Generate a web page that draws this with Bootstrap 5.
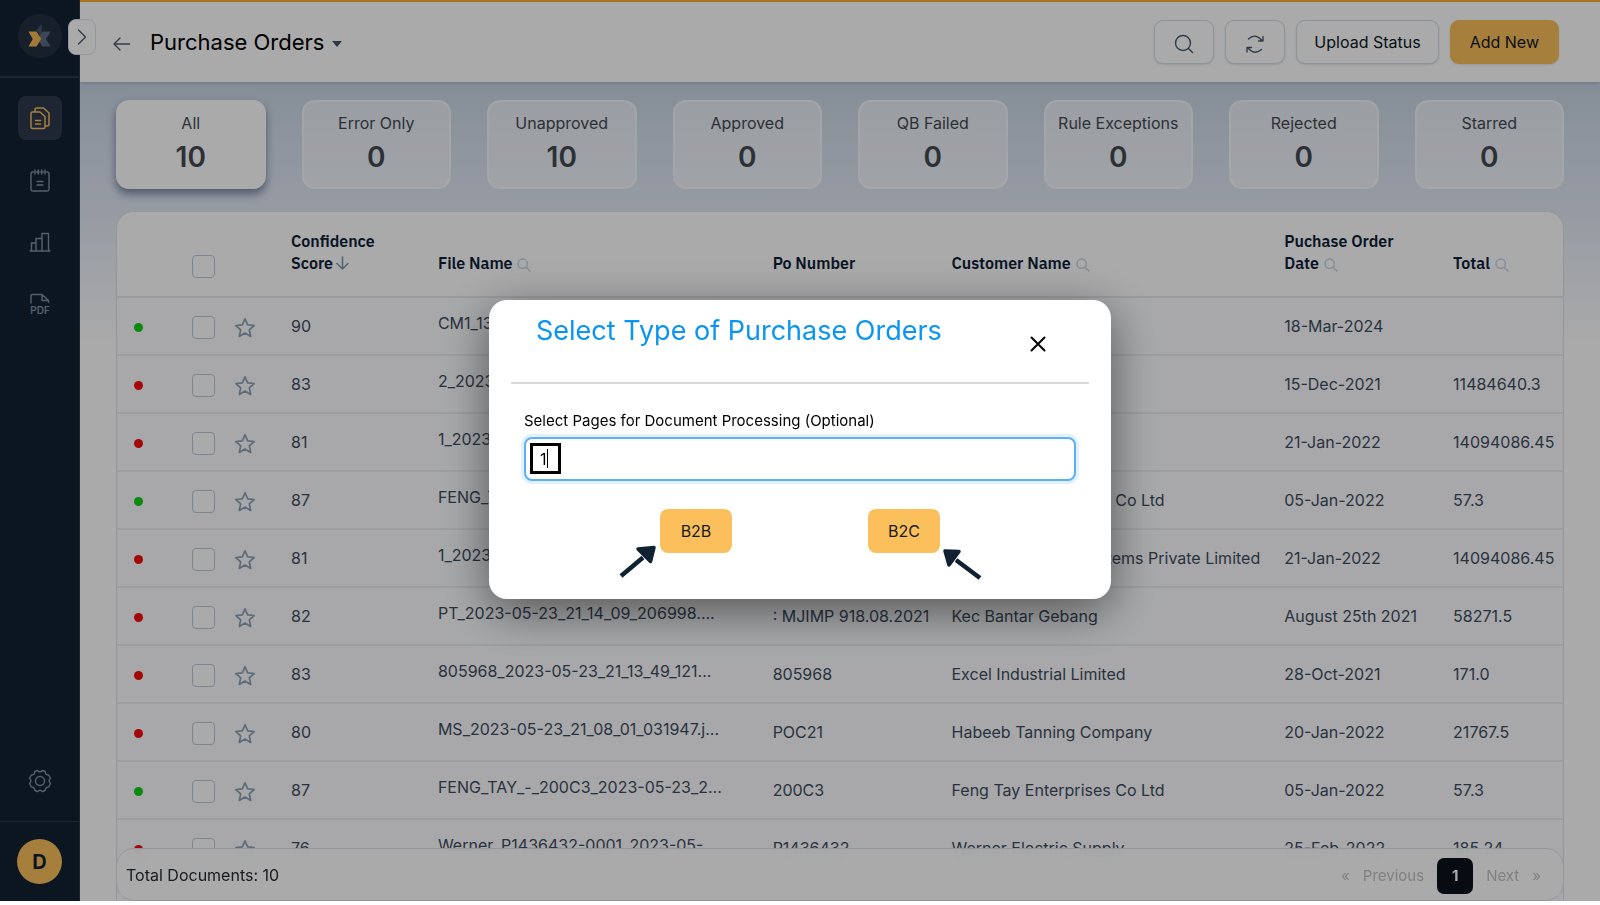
<!DOCTYPE html>
<html lang="en">
<head>
<meta charset="utf-8">
<meta name="viewport" content="width=device-width, initial-scale=1">
<title>Purchase Orders</title>
<link rel="stylesheet" href="https://cdn.jsdelivr.net/npm/bootstrap@5.3.0/dist/css/bootstrap.min.css">
<style>
  body { font-family: Inter, "Liberation Sans", sans-serif; font-size: 16px; line-height: 22px; color: #000; background: #fff; overflow: hidden; }
  .shell, .modal.type-modal { height: calc(100vh - 4px); }
  svg { display: block; }
  .line-icon { fill: none; stroke: currentColor; stroke-linecap: round; stroke-linejoin: round; }

  .side { width: 80px; background: #132230; color: #8090a3; border-right: 1px solid #2b3a4b; }
  .side-top { height: 78px; border-bottom: 2px solid #2b3a4b; }
  .side-end { height: 80px; border-top: 1px solid #2b3a4b; }
  .logo-disc { width: 44px; height: 44px; background: #233140; }
  .side-links { gap: 18px; padding: 18px 0; }
  .side-link { width: 44px; height: 44px; border-radius: 8px; color: #8090a3; }
  .side-link.active { background: #2c3a4b; color: #fbbf5c; }
  .avatar { width: 45px; height: 45px; background: #fbbf5c; color: #132230; font-size: 20px; }
  .side-toggle { position: absolute; left: 68px; top: 19px; z-index: 5; width: 28px; height: 36px; border: 1px solid #dde3ea; border-radius: 8px; background: #fff; color: #4d5a6a; }

  .topbar { height: 82px; border-top: 2px solid #fbae2d; background: #fff; padding: 0 41px 0 32px; box-shadow: 0 1px 3px rgba(60, 80, 110, .25); z-index: 1; }
  .back-link { color: #4a5b70; margin-right: 18px; }
  .page-title { font-size: 22px; line-height: 30px; }
  .tools { gap: 11px; }
  .tool { height: 44px; border: 1px solid #d3dde8; border-radius: 9px; background: #fff; color: #0c1825; padding: 0 17px; line-height: 22px; box-shadow: 0 1px 2px rgba(60, 80, 110, .15); }
  .tool-icon { width: 60px; padding: 0; color: #4a5b70; }
  .tool-gold { border-color: #fbbf5c; background: #fbbf5c; color: #0f1720; padding: 0 19px; }

  .board { padding: 18px 36px 0; background: linear-gradient(#c8d5e2 0, #d6e0ef 60px, #e2e9f5 130px, #fff 260px); min-height: 0; }
  .tabs-grid { display: grid; grid-template-columns: repeat(8, 1fr); gap: 36px; }
  .stat { height: 89px; border: 2px solid rgba(255, 255, 255, .5); border-radius: 13px; background: rgba(255, 255, 255, .55); color: #434a52; padding: 2px 0 0; text-align: center; }
  .stat strong { display: block; font-size: 28px; font-weight: 600; line-height: 46px; }
  .stat.active { background: #fff; border-color: #fff; box-shadow: 0 5px 8px rgba(50, 70, 105, .6); }

  .sheet { border: 1px solid #dde3ec; border-bottom: 0; border-radius: 18px 18px 0 0; background: #fcfdff; margin-top: 22px; min-height: 0; }
  .orders { table-layout: fixed; width: 100%; border-collapse: separate; border-spacing: 0; white-space: nowrap; color: #3c4c60; }
  .orders th { height: 86px; padding: 0 0 22px; vertical-align: bottom; background: #fff; border-bottom: 2px solid #e6e9ee; font-family: "IBM Plex Sans", Roboto, sans-serif; font-weight: 600; color: #0d2038; }
  .orders th.tick-head { padding-bottom: 18px; }
  .orders td { height: 58px; padding: 0; vertical-align: middle; border-bottom: 2px solid #ebeef3; }
  .orders td.file { padding-bottom: 6px; }
  .orders .form-check-input { display: block; width: 23px; height: 23px; margin: 0; border: 1px solid #bccad9; border-radius: 4px; background: #fff; }
  .orders td .form-check-input { margin-top: 2px; }
  .col-dot { width: 75px; }
  .col-tick { width: 42px; }
  .col-star { width: 57px; }
  .col-score { width: 10.16%; }
  .col-file { width: 23.15%; }
  .col-po { width: 12.37%; }
  .col-customer { width: 23.01%; }
  .col-date { width: 11.68%; }
  .status { display: block; width: 9px; height: 9px; margin: 2px 0 0 17px; border-radius: 50%; background: #f50b0b; }
  .status.ok { background: #12cf12; }
  .star { padding: 0; border: 0; margin-top: 3px; background: none; color: #8ba0b8; display: block; }
  .glass, .sort-arrow { display: inline-block; vertical-align: -3px; margin-left: 1px; color: #c3d2e2; }
  .sort-arrow { vertical-align: -1px; margin-left: -1px; color: #7f9bb8; }

  .foot { position: absolute; left: -1px; right: -1px; bottom: 0; height: 53px; border: 1px solid #dde1ea; border-radius: 18px; background: rgba(255, 255, 255, .92); backdrop-filter: blur(8px); padding: 0 22px 0 9px; color: #262a30; }
  .foot .pagination { gap: 14px; padding-top: 2px; }
  .foot .page-link { border: 0; background: none; padding: 0; color: #c2c2c2; font-size: 15px; line-height: 36px; }
  .foot .active .page-link { width: 36px; border-radius: 7px; background: #09121c; color: #fff; text-align: center; font-weight: 700; }

  .type-modal { background: rgba(0, 0, 0, .333); }
  .type-modal .modal-dialog { max-width: 622px; margin: 0 auto; padding-bottom: 3px; }
  .type-modal .modal-content { border: 0; border-radius: 18px; box-shadow: 0 12px 48px rgba(0, 0, 0, .5); }
  .type-modal .modal-header { height: 84px; margin: 0 22px; padding: 15px 43px 0 25px; border-bottom: 2px solid #d8d9da; border-radius: 0; align-items: flex-start; }
  .type-modal .modal-title { font-size: 27px; line-height: 32px; font-weight: 400; color: #0a95f2; }
  .x-close { border: 0; background: none; padding: 0; margin-top: 21px; color: #000; }
  .type-modal .modal-body { padding: 26px 35px 46px; }
  .pages-label { font-size: 15px; line-height: 22px; margin-bottom: 5px; }
  .pages-box, .pages-box:focus { height: 44px; padding: 0 14px; border: 2px solid #5cb1f6; border-radius: 8px; box-shadow: 0 0 0 3px #e2f1fe; color: #000; }
  .mark-box { position: absolute; left: 6px; top: 6px; width: 31px; height: 31px; border: 3px solid #000; pointer-events: none; }
  .caret-line { position: absolute; right: 10px; top: 3px; bottom: 3px; width: 1px; background: #000; }
  .choices { gap: 136px; margin-top: 28px; }
  .choice { width: 72px; height: 44px; border: 0; border-radius: 8px; background: #fbbf5c; color: #141b24; padding: 0; font-size: 16px; }
  .pointer { position: absolute; fill: #102132; stroke: #102132; stroke-linejoin: round; pointer-events: none; }
  .pointer-left { right: 100%; top: 36px; margin-right: 3px; }
  .pointer-right { left: 100%; top: 39px; margin-left: 2px; }
</style>
</head>
<body>
<svg width="0" height="0" class="position-absolute" aria-hidden="true">
  <symbol id="star" viewBox="0 0 22 22"><path d="M11 1.800l2.700 6 6.500.7-4.900 4.300 1.400 6.600L11 16.100l-5.700 3.300 1.400-6.600L1.800 8.500l6.500-.7z" fill="none" stroke="currentColor" stroke-width="1.700" stroke-linejoin="round"/></symbol>
  <symbol id="glass" viewBox="0 0 14 14"><g fill="none" stroke="currentColor" stroke-width="1.400" stroke-linecap="round"><circle cx="5.700" cy="5.700" r="4.700"/><path d="M9.200 9.200L13 13"/></g></symbol>
</svg>

<div class="shell d-flex position-relative">
  <nav class="side d-flex flex-column align-items-center flex-shrink-0">
    <div class="side-top w-100 d-flex justify-content-center align-items-center">
      <a href="#" class="logo-disc rounded-circle d-flex align-items-center justify-content-center mb-1" aria-label="Home">
        <svg width="24" height="24" viewBox="0 0 24 24"><path d="M22.700 7.500H14.500L12 11.300V18.800l2.500 3.700h8.200L18 15z" fill="#5d6b80"/><path d="M8.500 5.500L13.700.3V9L12 11.500z" fill="#45536a"/><path d="M.5 7.500h8l4.800 7.500-4.800 7.500h-8L4.700 15z" fill="#f5b956"/></svg>
      </a>
    </div>
    <div class="side-links d-flex flex-column flex-grow-1">
      <a href="#" class="side-link active d-flex align-items-center justify-content-center" aria-label="Documents">
        <svg class="line-icon" width="22" height="24" viewBox="0 0 22 24" stroke-width="1.500"><path d="M3.500 6h7.500l5 4.500v10.500a1.500 1.500 0 0 1-1.500 1.500h-11A1.500 1.500 0 0 1 2 21V7.500A1.500 1.500 0 0 1 3.500 6zM6 6V4a2 2 0 0 1 2-2h6.500L20 7v11a2 2 0 0 1-2 2h-2M6.500 14.500h5M6.500 18h5"/></svg>
      </a>
      <a href="#" class="side-link d-flex align-items-center justify-content-center" aria-label="Tasks">
        <svg class="line-icon" width="22" height="26" viewBox="0 0 22 26" stroke-width="1.400"><path d="M4.500 5H3.700A1.700 1.700 0 0 0 2 6.700v15.600A1.700 1.700 0 0 0 3.700 24h14.600a1.700 1.700 0 0 0 1.700-1.700V6.700A1.700 1.700 0 0 0 18.300 5h-.8M6 3v4M9.300 3v4M12.700 3v4M16 3v4M7.500 5h.5M10.800 5h.5M14 5h.5M8 14.500h6M8 18h6"/></svg>
      </a>
      <a href="#" class="side-link d-flex align-items-center justify-content-center" aria-label="Reports">
        <svg class="line-icon" width="22" height="22" viewBox="0 0 22 22" stroke-width="1.400"><path d="M1 20h20M2.500 20v-8H7M7 20V7.500h6M13 20V2.500h6.500V20"/></svg>
      </a>
      <a href="#" class="side-link d-flex align-items-center justify-content-center" aria-label="PDF">
        <svg width="22" height="24" viewBox="0 0 22 24"><path class="line-icon" stroke-width="1.400" d="M2 11V4a1.500 1.500 0 0 1 1.500-1.500H13l6.500 6v2M13 2.500v6h6.500"/><text x="11" y="22" text-anchor="middle" font-size="10" font-weight="600" fill="currentColor">PDF</text></svg>
      </a>
      <a href="#" class="side-link d-flex align-items-center justify-content-center mt-auto" aria-label="Settings">
        <svg class="line-icon" width="24" height="24" viewBox="0 0 24 24" stroke-width="1.400"><circle cx="12" cy="12" r="4.500"/><path d="M9.500 1.500q2.500 2.600 5 0l2.600 1q.2 3.500 3.800 3.800l1.500 3.200q-2.500 2.500 0 5l-1.500 3.200q-3.600.3-3.800 3.800l-2.600 1q-2.500-2.600-5 0l-2.600-1q-.2-3.500-3.800-3.800L1.600 14.500q2.500-2.500 0-5l1.500-3.200q3.600-.3 3.800-3.800z"/></svg>
      </a>
    </div>
    <div class="side-end w-100 d-flex justify-content-center align-items-center">
      <button type="button" class="avatar border-0 rounded-circle fw-bold p-0">D</button>
    </div>
  </nav>
  <button type="button" class="side-toggle p-0 d-flex align-items-center justify-content-center" aria-label="Expand menu">
    <svg class="line-icon" width="10" height="16" viewBox="0 0 10 16" stroke-width="1.400"><path d="M1.500 1l7 7-7 7"/></svg>
  </button>

  <main class="d-flex flex-column flex-grow-1 overflow-hidden">
    <header class="topbar d-flex align-items-center flex-shrink-0">
      <a href="#" class="back-link mt-1" aria-label="Back">
        <svg class="line-icon" width="20" height="16" viewBox="0 0 20 16" stroke-width="1.400"><path d="M17.500 8H2M8 2L2 8l6 6"/></svg>
      </a>
      <h1 class="page-title fw-normal mb-0 me-2">Purchase Orders</h1>
      <svg class="mt-1" width="10" height="6" viewBox="0 0 10 6"><path d="M0 0h10L5 6z" fill="#42546a"/></svg>
      <div class="tools d-flex ms-auto">
        <button type="button" class="tool tool-icon d-flex align-items-center justify-content-center" aria-label="Search"><svg class="line-icon mt-1" width="20" height="20" viewBox="0 0 20 20" stroke-width="1.400"><circle cx="9" cy="9" r="7.500"/><path d="M14.500 14.500l4 4"/></svg></button>
        <button type="button" class="tool tool-icon d-flex align-items-center justify-content-center" aria-label="Refresh"><svg class="line-icon mt-1" width="20" height="20" viewBox="0 0 20 20" stroke-width="1.400"><path d="M3.500 5q6.500-6.500 13.500 1.500M18 2.500v4.500h-4.500M16.500 15.500q-7 6-13.500-1.500M2 18v-4.500h4.500"/></svg></button>
        <button type="button" class="tool">Upload Status</button>
        <button type="button" class="tool tool-gold">Add New</button>
      </div>
    </header>

    <section class="board d-flex flex-column flex-grow-1">
      <div class="tabs-grid flex-shrink-0">
        <button type="button" class="stat active">All<strong>10</strong></button>
        <button type="button" class="stat">Error Only<strong>0</strong></button>
        <button type="button" class="stat">Unapproved<strong>10</strong></button>
        <button type="button" class="stat">Approved<strong>0</strong></button>
        <button type="button" class="stat">QB Failed<strong>0</strong></button>
        <button type="button" class="stat text-nowrap">Rule Exceptions<strong>0</strong></button>
        <button type="button" class="stat">Rejected<strong>0</strong></button>
        <button type="button" class="stat">Starred<strong>0</strong></button>
      </div>

      <div class="sheet position-relative flex-grow-1 overflow-hidden">
        <table class="orders">
          <colgroup><col class="col-dot"><col class="col-tick"><col class="col-star"><col class="col-score"><col class="col-file"><col class="col-po"><col class="col-customer"><col class="col-date"><col></colgroup>
          <thead>
            <tr>
              <th></th>
              <th class="tick-head"><input class="form-check-input" type="checkbox" aria-label="Select all"></th>
              <th></th>
              <th>Confidence<br>Score <svg class="line-icon sort-arrow" width="13" height="14" viewBox="0 0 13 14" stroke-width="1.600"><path d="M6.500 1v12M1 7.500L6.500 13 12 7.500"/></svg></th>
              <th>File Name <svg class="glass" width="14" height="14"><use href="#glass"/></svg></th>
              <th>Po Number</th>
              <th>Customer Name <svg class="glass" width="14" height="14"><use href="#glass"/></svg></th>
              <th>Puchase Order<br>Date <svg class="glass" width="14" height="14"><use href="#glass"/></svg></th>
              <th>Total <svg class="glass" width="14" height="14"><use href="#glass"/></svg></th>
            </tr>
          </thead>
          <tbody>
            <tr><td><span class="status ok"></span></td><td><input class="form-check-input" type="checkbox" aria-label="Select row 1"></td><td><button type="button" class="star" aria-label="Star"><svg width="22" height="22"><use href="#star"/></svg></button></td><td>90</td><td class="file">CM1_13</td><td></td><td></td><td>18-Mar-2024</td><td></td></tr>
            <tr><td><span class="status"></span></td><td><input class="form-check-input" type="checkbox" aria-label="Select row 2"></td><td><button type="button" class="star" aria-label="Star"><svg width="22" height="22"><use href="#star"/></svg></button></td><td>83</td><td class="file">2_2023</td><td></td><td></td><td>15-Dec-2021</td><td>11484640.3</td></tr>
            <tr><td><span class="status"></span></td><td><input class="form-check-input" type="checkbox" aria-label="Select row 3"></td><td><button type="button" class="star" aria-label="Star"><svg width="22" height="22"><use href="#star"/></svg></button></td><td>81</td><td class="file">1_2023</td><td></td><td></td><td>21-Jan-2022</td><td>14094086.45</td></tr>
            <tr><td><span class="status ok"></span></td><td><input class="form-check-input" type="checkbox" aria-label="Select row 4"></td><td><button type="button" class="star" aria-label="Star"><svg width="22" height="22"><use href="#star"/></svg></button></td><td>87</td><td class="file">FENG_T</td><td></td><td>Feng Tay Enterprises Co Ltd</td><td>05-Jan-2022</td><td>57.3</td></tr>
            <tr><td><span class="status"></span></td><td><input class="form-check-input" type="checkbox" aria-label="Select row 5"></td><td><button type="button" class="star" aria-label="Star"><svg width="22" height="22"><use href="#star"/></svg></button></td><td>81</td><td class="file">1_2023</td><td></td><td class="text-end pe-4">Systems Private Limited</td><td>21-Jan-2022</td><td>14094086.45</td></tr>
            <tr><td><span class="status"></span></td><td><input class="form-check-input" type="checkbox" aria-label="Select row 6"></td><td><button type="button" class="star" aria-label="Star"><svg width="22" height="22"><use href="#star"/></svg></button></td><td>82</td><td class="file">PT_2023-05-23_21_14_09_206998....</td><td>: MJIMP 918.08.2021</td><td>Kec Bantar Gebang</td><td>August 25th 2021</td><td>58271.5</td></tr>
            <tr><td><span class="status"></span></td><td><input class="form-check-input" type="checkbox" aria-label="Select row 7"></td><td><button type="button" class="star" aria-label="Star"><svg width="22" height="22"><use href="#star"/></svg></button></td><td>83</td><td class="file">805968_2023-05-23_21_13_49_121...</td><td>805968</td><td>Excel Industrial Limited</td><td>28-Oct-2021</td><td>171.0</td></tr>
            <tr><td><span class="status"></span></td><td><input class="form-check-input" type="checkbox" aria-label="Select row 8"></td><td><button type="button" class="star" aria-label="Star"><svg width="22" height="22"><use href="#star"/></svg></button></td><td>80</td><td class="file">MS_2023-05-23_21_08_01_031947.j...</td><td>POC21</td><td>Habeeb Tanning Company</td><td>20-Jan-2022</td><td>21767.5</td></tr>
            <tr><td><span class="status ok"></span></td><td><input class="form-check-input" type="checkbox" aria-label="Select row 9"></td><td><button type="button" class="star" aria-label="Star"><svg width="22" height="22"><use href="#star"/></svg></button></td><td>87</td><td class="file">FENG_TAY_-_200C3_2023-05-23_2...</td><td>200C3</td><td>Feng Tay Enterprises Co Ltd</td><td>05-Jan-2022</td><td>57.3</td></tr>
            <tr><td><span class="status"></span></td><td><input class="form-check-input" type="checkbox" aria-label="Select row 10"></td><td><button type="button" class="star" aria-label="Star"><svg width="22" height="22"><use href="#star"/></svg></button></td><td>76</td><td class="file">Werner_P1436432-0001_2023-05-</td><td>P1436432</td><td>Werner Electric Supply</td><td>25-Feb-2022</td><td>185.24</td></tr>
          </tbody>
        </table>
        <div class="foot d-flex align-items-center justify-content-between">
          <span>Total Documents: 10</span>
          <ul class="pagination mb-0">
            <li class="page-item"><a class="page-link" href="#" aria-label="First">«</a></li>
            <li class="page-item"><a class="page-link" href="#">Previous</a></li>
            <li class="page-item active"><a class="page-link" href="#">1</a></li>
            <li class="page-item"><a class="page-link" href="#">Next</a></li>
            <li class="page-item"><a class="page-link" href="#" aria-label="Last">»</a></li>
          </ul>
        </div>
      </div>
    </section>
  </main>
</div>

<div class="modal type-modal d-block" tabindex="-1" role="dialog" aria-labelledby="typeTitle">
  <div class="modal-dialog d-flex align-items-center h-100">
    <div class="modal-content">
      <div class="modal-header">
        <h2 class="modal-title" id="typeTitle">Select Type of Purchase Orders</h2>
        <button type="button" class="x-close" aria-label="Close"><svg class="line-icon" width="16" height="16" viewBox="0 0 16 16" stroke-width="2"><path d="M1.500 1.500l13 13M14.500 1.500l-13 13"/></svg></button>
      </div>
      <div class="modal-body">
        <label for="pages" class="pages-label d-block">Select Pages for Document Processing (Optional)</label>
        <div class="position-relative">
          <input id="pages" class="form-control pages-box" type="text" value="1">
          <span class="mark-box"><span class="caret-line"></span></span>
        </div>
        <div class="choices d-flex justify-content-center">
          <div class="position-relative">
            <button type="button" class="choice">B2B</button>
            <svg class="pointer pointer-left" width="38" height="34" viewBox="0 0 38 34"><path d="M2 31L24 12.500" stroke-width="4.500"/><path d="M35 2.500L31.500 16.500 19 4z" stroke-width="3.500"/></svg>
          </div>
          <div class="position-relative">
            <button type="button" class="choice">B2C</button>
            <svg class="pointer pointer-right" width="40" height="34" viewBox="0 0 40 34"><path d="M38 30L14 12" stroke-width="4.500"/><path d="M3 3L17 3.500 7 17z" stroke-width="3.500"/></svg>
          </div>
        </div>
      </div>
    </div>
  </div>
</div>
<script src="https://cdn.jsdelivr.net/npm/bootstrap@5.3.0/dist/js/bootstrap.bundle.min.js"></script>
</body>
</html>
